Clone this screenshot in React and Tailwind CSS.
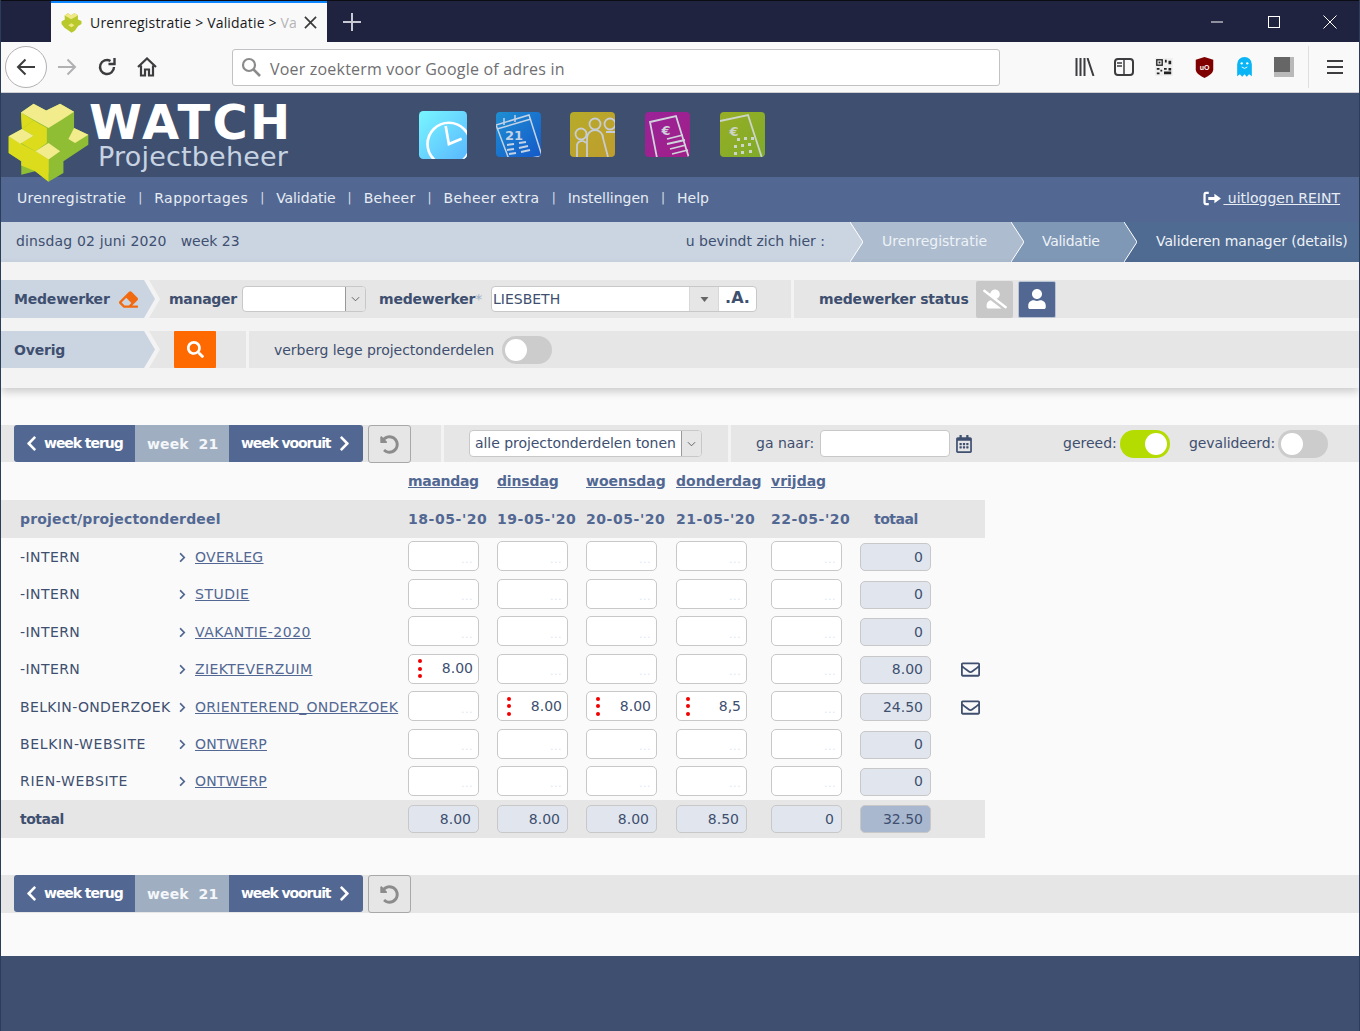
import React from "react";
import { FaChevronLeft, FaChevronRight, FaSearch, FaEraser, FaUser, FaUserSlash, FaRegEnvelope, FaRegCalendarAlt, FaUndoAlt } from "react-icons/fa";

const ff = "font-['DejaVu_Sans',Verdana,sans-serif]";

const Logo = () => (
  <svg viewBox="23 40 244 237" className="w-[81px] h-[79px] -mb-[9px] shrink-0 relative z-10">
    <polygon points="62,68 100,42 138,62 180,42 222,66 222,115 265,135 265,165 190,215 190,250 145,277 105,245 63,256 63,215 25,190 25,140 65,118" fill="#8fbe35" />
    <polygon points="62,68 100,92 65,118" fill="#dcdc1c" />
    <polygon points="25,140 62,162 105,185 145,210 145,277 105,245 63,228 63,215 25,190" fill="#dcdc1c" />
    <polygon points="100,92 140,115 140,160 105,185 62,160 100,138 65,118" fill="#dcdc1c" />
    <polygon points="62,68 100,42 138,62 180,42 222,66 185,90 145,115 100,90" fill="#f2ec8d" />
    <polygon points="25,140 65,118 100,138 60,162" fill="#f2ec8d" />
    <polygon points="222,115 265,135 225,160 205,148" fill="#f2ec8d" />
    <polygon points="105,185 145,160 180,185 145,210" fill="#f2ec8d" />
    <polygon points="105,185 145,210 145,250 105,225" fill="#dcdc1c" />
  </svg>
);

const AppIcon = ({ from, to, size, children }) => (
  <svg viewBox="0 0 45 45" style={{ width: size, height: size }} className="shrink-0">
    <defs>
      <linearGradient id={from.slice(1)} x1="0" y1="0" x2="1" y2="1">
        <stop offset="0" stopColor={from} />
        <stop offset="1" stopColor={to} />
      </linearGradient>
      <clipPath id={"c" + from.slice(1)}><rect width="45" height="45" rx="4" /></clipPath>
    </defs>
    <rect width="45" height="45" rx="4" fill={`url(#${from.slice(1)})`} />
    <g clipPath={`url(#c${from.slice(1)})`} fill="none">{children}</g>
  </svg>
);

const Crumb = ({ l, r, line = "#ffffff" }) => (
  <svg viewBox="0 0 13 40" className="w-[13px] h-[40px] shrink-0 block" style={{ background: r }}>
    <polygon points="0,0 13,20 0,40" fill={l} />
    <polyline points="0,0 13,20 0,40" fill="none" stroke={line} strokeWidth="1" />
  </svg>
);

const LabelArrow = ({ h }) => (
  <svg viewBox={`0 0 16 ${h}`} style={{ width: 16, height: h }} className="shrink-0 block">
    <polygon points={`0,0 16,0 16,${h} 0,${h}`} fill="#e6e6e6" />
    <polygon points={`0,0 5,${0} 16,${h / 2} 5,${h} 0,${h}`} fill="#f3f3f3" />
    <polygon points={`0,0 11,${h / 2} 0,${h}`} fill="#cbd5e2" />
  </svg>
);

const Toggle = ({ on }) => (
  <div className={`w-[50px] h-[28px] rounded-full flex items-center px-[3px] shrink-0 ${on ? "bg-[#b5dc00] justify-end" : "bg-[#cccccc] justify-start"}`}>
    <div className="w-[22px] h-[22px] rounded-full bg-white" />
  </div>
);

const Cell = ({ v }) => (
  <div className="w-[71px] h-[30px] -mt-[2px] bg-white border border-[#c8c8c8] rounded-[5px] flex items-center justify-between pl-[9px] pr-[5px] text-[14px] text-[#3e4f6f]">
    {v ? (
      <>
        <div className="flex flex-col gap-[3.5px]">
          <span className="w-[4px] h-[4px] rounded-full bg-[#f00000]" />
          <span className="w-[4px] h-[4px] rounded-full bg-[#f00000]" />
          <span className="w-[4px] h-[4px] rounded-full bg-[#f00000]" />
        </div>
        <span>{v}</span>
      </>
    ) : (
      <>
        <span />
        <span className="text-[#dde8f5] text-[11px] leading-none pt-[6px] tracking-[0.5px]">...</span>
      </>
    )}
  </div>
);

const Total = ({ v, dark }) => (
  <div className={`w-[71px] h-[28px] border border-[#c8c8c8] rounded-[5px] flex items-center justify-end pr-[7px] text-[14px] text-[#3e4f6f] ${dark ? "bg-[#a9b8cf]" : "bg-[#e1e6ee]"}`}>
    {v}
  </div>
);

const rows = [
  { h: "h-[38px]", p: "-INTERN", pc: "tracking-[0.42px]", d: "OVERLEG", dc: "tracking-[0.3px]", vals: [], t: "0" },
  { h: "h-[37px]", p: "-INTERN", pc: "tracking-[0.42px]", d: "STUDIE", dc: "tracking-[0.5px]", vals: [], t: "0" },
  { h: "h-[38px]", p: "-INTERN", pc: "tracking-[0.42px]", d: "VAKANTIE-2020", dc: "tracking-[0.5px]", vals: [], t: "0" },
  { h: "h-[37px]", p: "-INTERN", pc: "tracking-[0.42px]", d: "ZIEKTEVERZUIM", dc: "tracking-[0.4px]", vals: ["8.00"], t: "8.00", mail: true },
  { h: "h-[38px]", p: "BELKIN-ONDERZOEK", pc: "tracking-[0.35px]", d: "ORIENTEREND_ONDERZOEK", dc: "tracking-[0.25px]", vals: ["", "8.00", "8.00", "8,5"], t: "24.50", mail: true },
  { h: "h-[37px]", p: "BELKIN-WEBSITE", pc: "tracking-[0.65px]", d: "ONTWERP", dc: "tracking-[0.15px]", vals: [], t: "0" },
  { h: "h-[37px]", p: "RIEN-WEBSITE", pc: "tracking-[0.66px]", d: "ONTWERP", dc: "tracking-[0.15px]", vals: [], t: "0" },
];

const nav = [
  { t: "Urenregistratie", c: "tracking-[0.27px]" },
  { t: "Rapportages", c: "tracking-[0.45px]" },
  { t: "Validatie", c: "tracking-[-0.1px]" },
  { t: "Beheer", c: "tracking-[0.3px]" },
  { t: "Beheer extra", c: "tracking-[0.42px]" },
  { t: "Instellingen", c: "tracking-[0px]" },
  { t: "Help", c: "tracking-[0px]" },
];

const grid = "grid grid-cols-[19px_159px_16px_213px_89px_89px_90px_95px_89px_101px_1fr] w-[984px] items-center";

const WeekNav = () => (
  <div className="flex h-full items-stretch ml-[13px] shrink-0">
    <div className="w-[121px] h-[37px] bg-[#526893] rounded-l-[3px] flex items-center text-white font-bold text-[14px] tracking-[-1.05px] pl-[9px]">
      <FaChevronLeft className="text-[17px] mr-[4px]" />week terug
    </div>
    <div className="w-[94px] h-[37px] bg-[#9fafc1] flex items-center text-[#f4f6f9] font-bold text-[14px] tracking-[0.1px] pl-[12px] pt-[2px]">
      week&nbsp;&nbsp;21
    </div>
    <div className="w-[134px] h-[37px] bg-[#526893] rounded-r-[3px] flex items-center text-white font-bold text-[14px] tracking-[-1.12px] pl-[12px]">
      week vooruit<FaChevronRight className="text-[17px] ml-[6px]" />
    </div>
    <div className="ml-[5px] w-[43px] h-[38px] border border-[#a8a8a8] rounded-[3px] flex items-center justify-center text-[#8c8c8c]">
      <FaUndoAlt className="text-[19px]" />
    </div>
  </div>
);

export default function App() {
  return (
    <div className={`w-[1360px] h-[1031px] flex flex-col overflow-hidden border-x border-[#2c3d5a] bg-[#fafafa] ${ff}`}>
      {/* tab bar */}
      <div className="h-[42px] bg-[#1f2340] border-t border-[#0c0c14] flex items-end shrink-0 font-['Open_Sans',sans-serif]">
        <div className="ml-[50px] w-[276px] h-[41px] bg-[#f9f9fa] border-t-2 border-[#0a84ff] flex items-center pl-[10px] pr-[8px]">
          <svg viewBox="20 38 250 240" className="w-[21px] h-[20px] mr-[8px]">
            <polygon points="62,68 100,42 138,64 180,42 222,66 222,115 265,135 265,170 225,195 185,250 145,275 105,245 60,215 25,170 25,140 65,115" fill="#b9c92c" />
            <polygon points="62,68 100,42 138,64 180,42 222,66 185,90 140,112 100,90" fill="#efe885" />
            <polygon points="105,185 145,160 180,185 145,210" fill="#efe885" />
          </svg>
          <div className="text-[14px] tracking-[0.18px] text-[#1a1a1a] whitespace-nowrap overflow-hidden w-[206px] flex-none">
            Urenregistratie &gt; Validatie &gt; <span className="text-[#b5b5b5]">Va</span>
          </div>
          <svg viewBox="0 0 14 14" className="w-[13px] h-[13px] ml-[8px]"><path d="M1 1 L13 13 M13 1 L1 13" stroke="#3a3a3a" strokeWidth="1.8" /></svg>
        </div>
        <div className="h-[41px] flex items-center ml-[16px]">
          <svg viewBox="0 0 18 18" className="w-[18px] h-[18px]"><path d="M9 0 V18 M0 9 H18" stroke="#c8c9d2" strokeWidth="2" /></svg>
        </div>
        <div className="ml-auto mr-[1px] h-[41px] flex items-center">
          <div className="w-[57px] flex justify-center"><svg viewBox="0 0 12 12" className="w-[12px] h-[12px]"><path d="M0 6 H12" stroke="#fff" strokeWidth="1" /></svg></div>
          <div className="w-[57px] flex justify-center"><svg viewBox="0 0 12 12" className="w-[12px] h-[12px]"><rect x="0.5" y="0.5" width="11" height="11" fill="none" stroke="#fff" /></svg></div>
          <div className="w-[56px] flex justify-center"><svg viewBox="0 0 14 14" className="w-[14px] h-[14px]"><path d="M0.5 0.5 L13.5 13.5 M13.5 0.5 L0.5 13.5" stroke="#fff" strokeWidth="1" /></svg></div>
        </div>
      </div>
      {/* toolbar */}
      <div className="h-[51px] bg-[#f9f9fa] border-b border-[#cfcfd1] flex items-center shrink-0 font-['Open_Sans',sans-serif]">
        <div className="ml-[4px] w-[42px] h-[42px] rounded-full border border-[#b1b1b3] bg-white flex items-center justify-center">
          <svg viewBox="0 0 20 18" className="w-[20px] h-[18px]"><path d="M19 9 H2 M9.5 1.5 L2 9 L9.5 16.5" fill="none" stroke="#3d3d40" strokeWidth="2" /></svg>
        </div>
        <svg viewBox="0 0 20 18" className="w-[20px] h-[18px] ml-[10px]"><path d="M1 9 H18 M10.5 1.5 L18 9 L10.5 16.5" fill="none" stroke="#b1b1b3" strokeWidth="2" /></svg>
        <svg viewBox="0 0 20 20" className="w-[20px] h-[20px] ml-[20px]"><path d="M17 10 A7 7 0 1 1 13.5 4 M17.5 1 V7 H11.5" fill="none" stroke="#3d3d40" strokeWidth="2.4" /></svg>
        <svg viewBox="0 0 20 20" className="w-[20px] h-[20px] ml-[20px]"><path d="M1 10 L10 1.5 L19 10 M4 8.5 V18.5 H8 V12.5 H12 V18.5 H16 V8.5" fill="none" stroke="#3d3d40" strokeWidth="2.2" /></svg>
        <div className="ml-[75px] w-[768px] h-[37px] bg-white border border-[#c2c2c4] rounded-[3px] flex items-center pl-[8px]">
          <svg viewBox="0 0 20 20" className="w-[20px] h-[20px] mr-[9px]"><circle cx="8" cy="8" r="6" fill="none" stroke="#8b8b8d" strokeWidth="2.2" /><path d="M12.5 12.5 L19 19" stroke="#8b8b8d" strokeWidth="2.6" /></svg>
          <span className="text-[16px] tracking-[0.2px] text-[#6f6f72] whitespace-nowrap pt-[3px]">Voer zoekterm voor Google of adres in</span>
        </div>
        <svg viewBox="0 0 20 18" className="w-[20px] h-[18px] ml-[75px]"><path d="M1.5 0 V18 M5.5 0 V18 M9.5 0 V18 M12.5 0 L18.5 18" stroke="#3d3d40" strokeWidth="2" fill="none" /></svg>
        <svg viewBox="0 0 20 18" className="w-[20px] h-[18px] ml-[19px]"><rect x="1" y="1" width="18" height="16" rx="3" fill="none" stroke="#3d3d40" strokeWidth="2" /><path d="M10 1 V17" stroke="#3d3d40" strokeWidth="1.5" /><path d="M3 5 H8 M3 8 H8" stroke="#3d3d40" strokeWidth="1.5" /></svg>
        <svg viewBox="0 0 20 20" className="w-[18px] h-[18px] ml-[21px]">
          <rect width="20" height="20" fill="#f0f0f0" />
          <rect x="2" y="2" width="6" height="6" fill="none" stroke="#222" strokeWidth="1.5" />
          <rect x="4" y="4" width="2" height="2" fill="#222" />
          <path d="M11 2 H13 V5 H11 Z M15 3 H18 V7 H15 Z M2 11 H5 V13 H2 Z M6 13 H8 V15 H6 Z M2 16 H5 V18 H2 Z M10 11 H13 V13 H10 Z M10 15 H18 V18 H10 Z M15 11 H18 V14 H15 Z" fill="#222" />
        </svg>
        <svg viewBox="0 0 20 24" className="w-[19px] h-[21px] ml-[22px]"><path d="M10 0 L20 3 V14 C20 19 14 22 10 24 C6 22 0 19 0 14 V3 Z" fill="#800000" /><text x="10" y="15" textAnchor="middle" fontSize="8" fontWeight="bold" fill="#fff" fontFamily="Liberation Sans">uO</text></svg>
        <svg viewBox="0 0 18 24" className="w-[17px] h-[22px] ml-[22px]"><path d="M1 22 V9 A8 8 0 0 1 17 9 V22 L14 20 L11.5 22.5 L9 20 L6.5 22.5 L4 20 Z" fill="#0ab5f5" /><circle cx="6" cy="8" r="1.3" fill="#fff" /><circle cx="12" cy="8" r="1.3" fill="#fff" /><path d="M6 12 Q9 15 12 12" stroke="#fff" fill="none" /></svg>
        <div className="ml-[21px] w-[20px] h-[20px] bg-[#b9b9b9]"><div className="w-[16px] h-[15px] bg-[#666666]" /></div>
        <div className="ml-[14px] w-px h-[42px] bg-[#dfdfe0]" />
        <svg viewBox="0 0 16 16" className="w-[16px] h-[16px] ml-[18px]"><path d="M0 2 H16 M0 8 H16 M0 14 H16" stroke="#3d3d40" strokeWidth="2" /></svg>
      </div>
      {/* header */}
      <div className="h-[84px] bg-[#3e4f6f] flex items-center shrink-0 pl-[7px] pt-[5px]">
        <Logo />
        <div className="flex flex-col w-[202px] -mt-[4px]">
          <div className="text-[48px] leading-[42px] font-bold text-white h-[42px] tracking-[2.2px]">WATCH</div>
          <div className="text-[27px] leading-[27px] text-[#c7d3e2] ml-[9px] whitespace-nowrap tracking-[0.2px]">Projectbeheer</div>
        </div>
        <div className="ml-[128px] flex items-center -mt-[6px]">
          <AppIcon from="#78f6ff" to="#5ab8ff" size={48}>
            <circle cx="28" cy="31" r="20" stroke="#fff" strokeWidth="2.5" />
            <path d="M25 14 L28 31 L40 26" stroke="#fff" strokeWidth="2.5" />
          </AppIcon>
          <div className="w-[29px]" />
          <AppIcon from="#1f8fd2" to="#1459c9" size={45}>
            <path d="M0 13 L33 3 L46 44 L14 50 Z" stroke="#c4d3e6" strokeWidth="1.5" />
            <path d="M1 17 L35 7 M8 6 V13 M19 3 V10" stroke="#c4d3e6" strokeWidth="1.5" />
            <text x="18" y="28" textAnchor="middle" fontSize="13" fontWeight="bold" fill="#c4d3e6" fontFamily="DejaVu Sans">21</text>
            <path d="M11 33 L18 32 M23 31 L30 30 M11 38 L18 37 M23 36 L32 34 M13 42 L20 41 M25 40 L34 38" stroke="#c4d3e6" strokeWidth="2" />
          </AppIcon>
          <div className="w-[29px]" />
          <AppIcon from="#b6ab2a" to="#bf9d2d" size={45}>
            <g stroke="#c7ccd5" strokeWidth="1.8">
              <circle cx="11" cy="22" r="5.5" /><circle cx="25" cy="12" r="5.5" /><circle cx="40" cy="12" r="5.5" />
              <path d="M7 45 V33 A5 5 0 0 1 16 31 M17 45 V26 A8 8 0 0 1 33 26 L38 45 M36 20 H46" />
            </g>
          </AppIcon>
          <div className="w-[30px]" />
          <AppIcon from="#9a2398" to="#a01f88" size={45}>
            <g stroke="#cfd4dc" strokeWidth="1.8">
              <path d="M5 10 L31 4 L44 46 H12 Z" />
              <path d="M22 27 L38 23 M22 32 L40 28 M25 37 L41 33 M27 42 L43 38" />
            </g>
            <text x="21" y="23" textAnchor="middle" fontSize="13" fontWeight="bold" fill="#cfd4dc" fontFamily="DejaVu Sans">€</text>
          </AppIcon>
          <div className="w-[30px]" />
          <AppIcon from="#98ae24" to="#7eab2b" size={45}>
            <path d="M0 9 L28 3 L42 46 H14" stroke="#cdd4c8" strokeWidth="1.8" />
            <text x="14" y="24" textAnchor="middle" fontSize="13" fontWeight="bold" fill="#cdd4c8" fontFamily="DejaVu Sans">€</text>
            <g fill="#cdd4c8">
              <rect x="17" y="26" width="3" height="3" /><rect x="24" y="25" width="3" height="3" /><rect x="31" y="25" width="3" height="3" />
              <rect x="14" y="33" width="3" height="3" /><rect x="21" y="32" width="3" height="3" /><rect x="28" y="31" width="3" height="3" />
              <rect x="14" y="40" width="3" height="3" /><rect x="21" y="39" width="3" height="3" /><rect x="29" y="38" width="3" height="3" />
            </g>
          </AppIcon>
        </div>
      </div>
      {/* nav */}
      <div className="h-[45px] bg-[#526893] flex items-center shrink-0 pl-[16px] pr-[19px] pb-[3px] text-[14px] text-[#e8edf4]">
        {nav.map((n, i) => (
          <React.Fragment key={n.t}>
            {i > 0 && <span className="mx-[12px] text-[12px] opacity-90">|</span>}
            <span className={n.c}>{n.t}</span>
          </React.Fragment>
        ))}
        <div className="ml-auto flex items-center">
          <svg viewBox="0 0 20 16" className="w-[19px] h-[15px]"><path d="M6 2 H3 Q1.5 2 1.5 4 V12 Q1.5 14 3 14 H6" fill="none" stroke="#fff" strokeWidth="2.4" /><path d="M5.5 6.4 H12 V3 L19 8 L12 13 V9.6 H5.5 Z" fill="#fff" /></svg>
          <span className="underline pl-[1px]">&nbsp;uitloggen REINT</span>
        </div>
      </div>
      {/* crumb */}
      <div className="h-[40px] flex items-stretch shrink-0 text-[14px]">
        <div className="flex-1 bg-[#cbd5e2] flex items-center pl-[15px] pr-[25px] pb-[2px] text-[#3e4f6f]">
          <span className="tracking-[0.15px]">dinsdag 02 juni 2020</span>
          <span className="ml-[14px]">week 23</span>
          <span className="ml-auto">u bevindt zich hier :</span>
        </div>
        <Crumb l="#cbd5e2" r="#adbccf" />
        <div className="w-[148px] bg-[#adbccf] flex items-center pl-[19px] pb-[2px] text-[#eef2f6]">Urenregistratie</div>
        <Crumb l="#adbccf" r="#7f98b6" />
        <div className="w-[100px] bg-[#7f98b6] flex items-center pl-[18px] pb-[2px] tracking-[-0.3px] text-[#eef2f6]">Validatie</div>
        <Crumb l="#7f98b6" r="#4f6b92" />
        <div className="w-[222px] bg-[#4f6b92] flex items-center pl-[19px] pb-[2px] tracking-[-0.11px] text-[#eef2f6] whitespace-nowrap">Valideren manager (details)</div>
      </div>
      {/* filters */}
      <div className="h-[126px] bg-[#f3f3f3] shrink-0 pt-[18px] shadow-[0_4px_8px_rgba(0,0,0,0.18)] relative z-10 flex flex-col gap-[13px] text-[#3e4f6f]">
        <div className="h-[38px] bg-[#e6e6e6] flex items-center text-[14px]">
          <div className="w-[143px] h-full bg-[#cbd5e2] flex items-center pl-[13px] font-bold shrink-0">
            <span className="tracking-[-0.2px] pt-[1px]">Medewerker</span>
            <FaEraser className="text-[#f26a10] text-[19px] ml-[9px]" />
          </div>
          <LabelArrow h={38} />
          <span className="ml-[9px] font-bold w-[73px] tracking-[-0.28px] pt-[1px]">manager</span>
          <div className="w-[124px] h-[26px] bg-white border border-[#c8c8c8] rounded-[4px] flex justify-end overflow-hidden">
            <div className="w-[20px] bg-[#e6e6e6] border-l border-[#999] flex items-center justify-center">
              <svg viewBox="0 0 10 6" className="w-[9px] h-[6px]"><path d="M1 1 L5 5 L9 1" fill="none" stroke="#555" /></svg>
            </div>
          </div>
          <span className="ml-[13px] font-bold w-[112px] whitespace-nowrap tracking-[-0.2px] pt-[1px]">medewerker<span className="text-[#9fb1c6] font-normal">*</span></span>
          <div className="w-[266px] h-[26px] bg-white border border-[#c8c8c8] rounded-[4px] flex items-stretch overflow-hidden">
            <div className="flex-1 pl-[1px] flex items-center pt-[1px]">LIESBETH</div>
            <div className="w-[29px] bg-[#e6e6e6] border-l border-[#d8d8d8] flex items-center justify-center">
              <svg viewBox="0 0 8 5" className="w-[9px] h-[5px]"><path d="M0 0 H8 L4 5 Z" fill="#666" /></svg>
            </div>
            <div className="w-[38px] border-l border-[#d8d8d8] flex items-center justify-center font-bold text-[16px] pb-[3px]">.A.</div>
          </div>
          <div className="ml-[34px] w-[3px] h-full bg-[#f3f3f3]" />
          <span className="ml-[25px] font-bold w-[157px] whitespace-nowrap tracking-[-0.18px] pt-[1px]">medewerker status</span>
          <div className="w-[37px] h-[37px] bg-[#c8c8c8] rounded-[2px] flex items-center justify-center text-white">
            <FaUserSlash className="text-[24px]" />
          </div>
          <div className="ml-[5px] w-[38px] h-[37px] bg-[#526893] border border-[#b8c4d4] rounded-[2px] flex items-center justify-center text-white">
            <FaUser className="text-[20px]" />
          </div>
        </div>
        <div className="h-[37px] bg-[#e6e6e6] flex items-center text-[14px]">
          <div className="w-[143px] h-full bg-[#cbd5e2] flex items-center pl-[13px] font-bold shrink-0 tracking-[-0.2px] pt-[1px]">Overig</div>
          <LabelArrow h={37} />
          <div className="ml-[14px] w-[42px] h-full bg-[#ff6a00] flex items-center justify-center text-white rounded-[1px]">
            <FaSearch className="text-[17px]" />
          </div>
          <div className="ml-[30px] w-[3px] h-full bg-[#f3f3f3]" />
          <span className="ml-[25px] whitespace-nowrap w-[228px] tracking-[-0.04px] pt-[1px]">verberg lege projectonderdelen</span>
          <Toggle />
        </div>
      </div>
      {/* main */}
      <div className="mt-[37px] h-[37px] bg-[#e6e6e6] flex items-center shrink-0 text-[14px] text-[#3e4f6f]">
        <WeekNav />
        <div className="ml-[30px] w-[3px] h-full bg-[#f3f3f3]" />
        <div className="ml-[25px] w-[233px] h-[27px] bg-white border border-[#c8c8c8] rounded-[4px] flex items-center justify-between pl-[5px] overflow-hidden whitespace-nowrap tracking-[-0.05px]">
          alle projectonderdelen tonen
          <div className="w-[20px] h-full bg-[#e6e6e6] border-l border-[#999] flex items-center justify-center">
            <svg viewBox="0 0 10 6" className="w-[9px] h-[6px]"><path d="M1 1 L5 5 L9 1" fill="none" stroke="#555" /></svg>
          </div>
        </div>
        <div className="ml-[26px] w-[3px] h-full bg-[#f3f3f3]" />
        <span className="ml-[25px] w-[64px] whitespace-nowrap">ga naar:</span>
        <div className="w-[130px] h-[27px] bg-white border border-[#c8c8c8] rounded-[4px]" />
        <FaRegCalendarAlt className="ml-[5px] text-[18px] text-[#3e4f6f]" />
        <span className="ml-[90px] w-[57px] whitespace-nowrap">gereed:</span>
        <Toggle on />
        <span className="ml-[19px] w-[89px] whitespace-nowrap tracking-[-0.1px]">gevalideerd:</span>
        <Toggle />
      </div>
      <div className={`${grid} h-[38px] shrink-0 font-bold text-[14px] text-[#526893]`}>
        <span className="col-start-5 underline tracking-[-0.3px]">maandag</span>
        <span className="underline tracking-[-0.15px]">dinsdag</span>
        <span className="underline">woensdag</span>
        <span className="underline">donderdag</span>
        <span className="underline">vrijdag</span>
      </div>
      <div className={`${grid} h-[38px] shrink-0 bg-[#e6e6e6] font-bold text-[14px] text-[#526893]`}>
        <span className="col-start-2 col-span-3 whitespace-nowrap tracking-[0.17px]">project/projectonderdeel</span>
        <span className="whitespace-nowrap tracking-[0.55px]">18-05-'20</span>
        <span className="whitespace-nowrap tracking-[0.55px]">19-05-'20</span>
        <span className="whitespace-nowrap tracking-[0.55px]">20-05-'20</span>
        <span className="whitespace-nowrap tracking-[0.55px]">21-05-'20</span>
        <span className="whitespace-nowrap tracking-[0.55px]">22-05-'20</span>
        <span className="pl-[14px] tracking-[-0.5px]">totaal</span>
      </div>
      {rows.map((r, i) => (
        <div key={i} className={`${grid} ${r.h} shrink-0 text-[14px] text-[#3e4f6f]`}>
          <span className={`col-start-2 whitespace-nowrap ${r.pc}`}>{r.p}</span>
          <FaChevronRight className="text-[11px] text-[#526893] -ml-[2px]" />
          <span className={`underline text-[#526893] whitespace-nowrap ${r.dc}`}>{r.d}</span>
          {[0, 1, 2, 3, 4].map((c) => (
            <Cell key={c} v={r.vals[c]} />
          ))}
          <Total v={r.t} />
          {r.mail ? <FaRegEnvelope className="text-[19px] text-[#3e4f6f]" /> : <span />}
        </div>
      ))}
      <div className={`${grid} h-[38px] shrink-0 bg-[#e6e6e6] text-[14px] text-[#3e4f6f]`}>
        <span className="col-start-2 col-span-3 font-bold tracking-[-0.5px]">totaal</span>
        <Total v="8.00" />
        <Total v="8.00" />
        <Total v="8.00" />
        <Total v="8.50" />
        <Total v="0" />
        <Total v="32.50" dark />
      </div>
      <div className="mt-[37px] h-[38px] bg-[#e6e6e6] flex items-start shrink-0 text-[14px]">
        <WeekNav />
      </div>
      <div className="flex-1" />
      <div className="h-[75px] bg-[#3e4f6f] shrink-0" />
    </div>
  );
}
